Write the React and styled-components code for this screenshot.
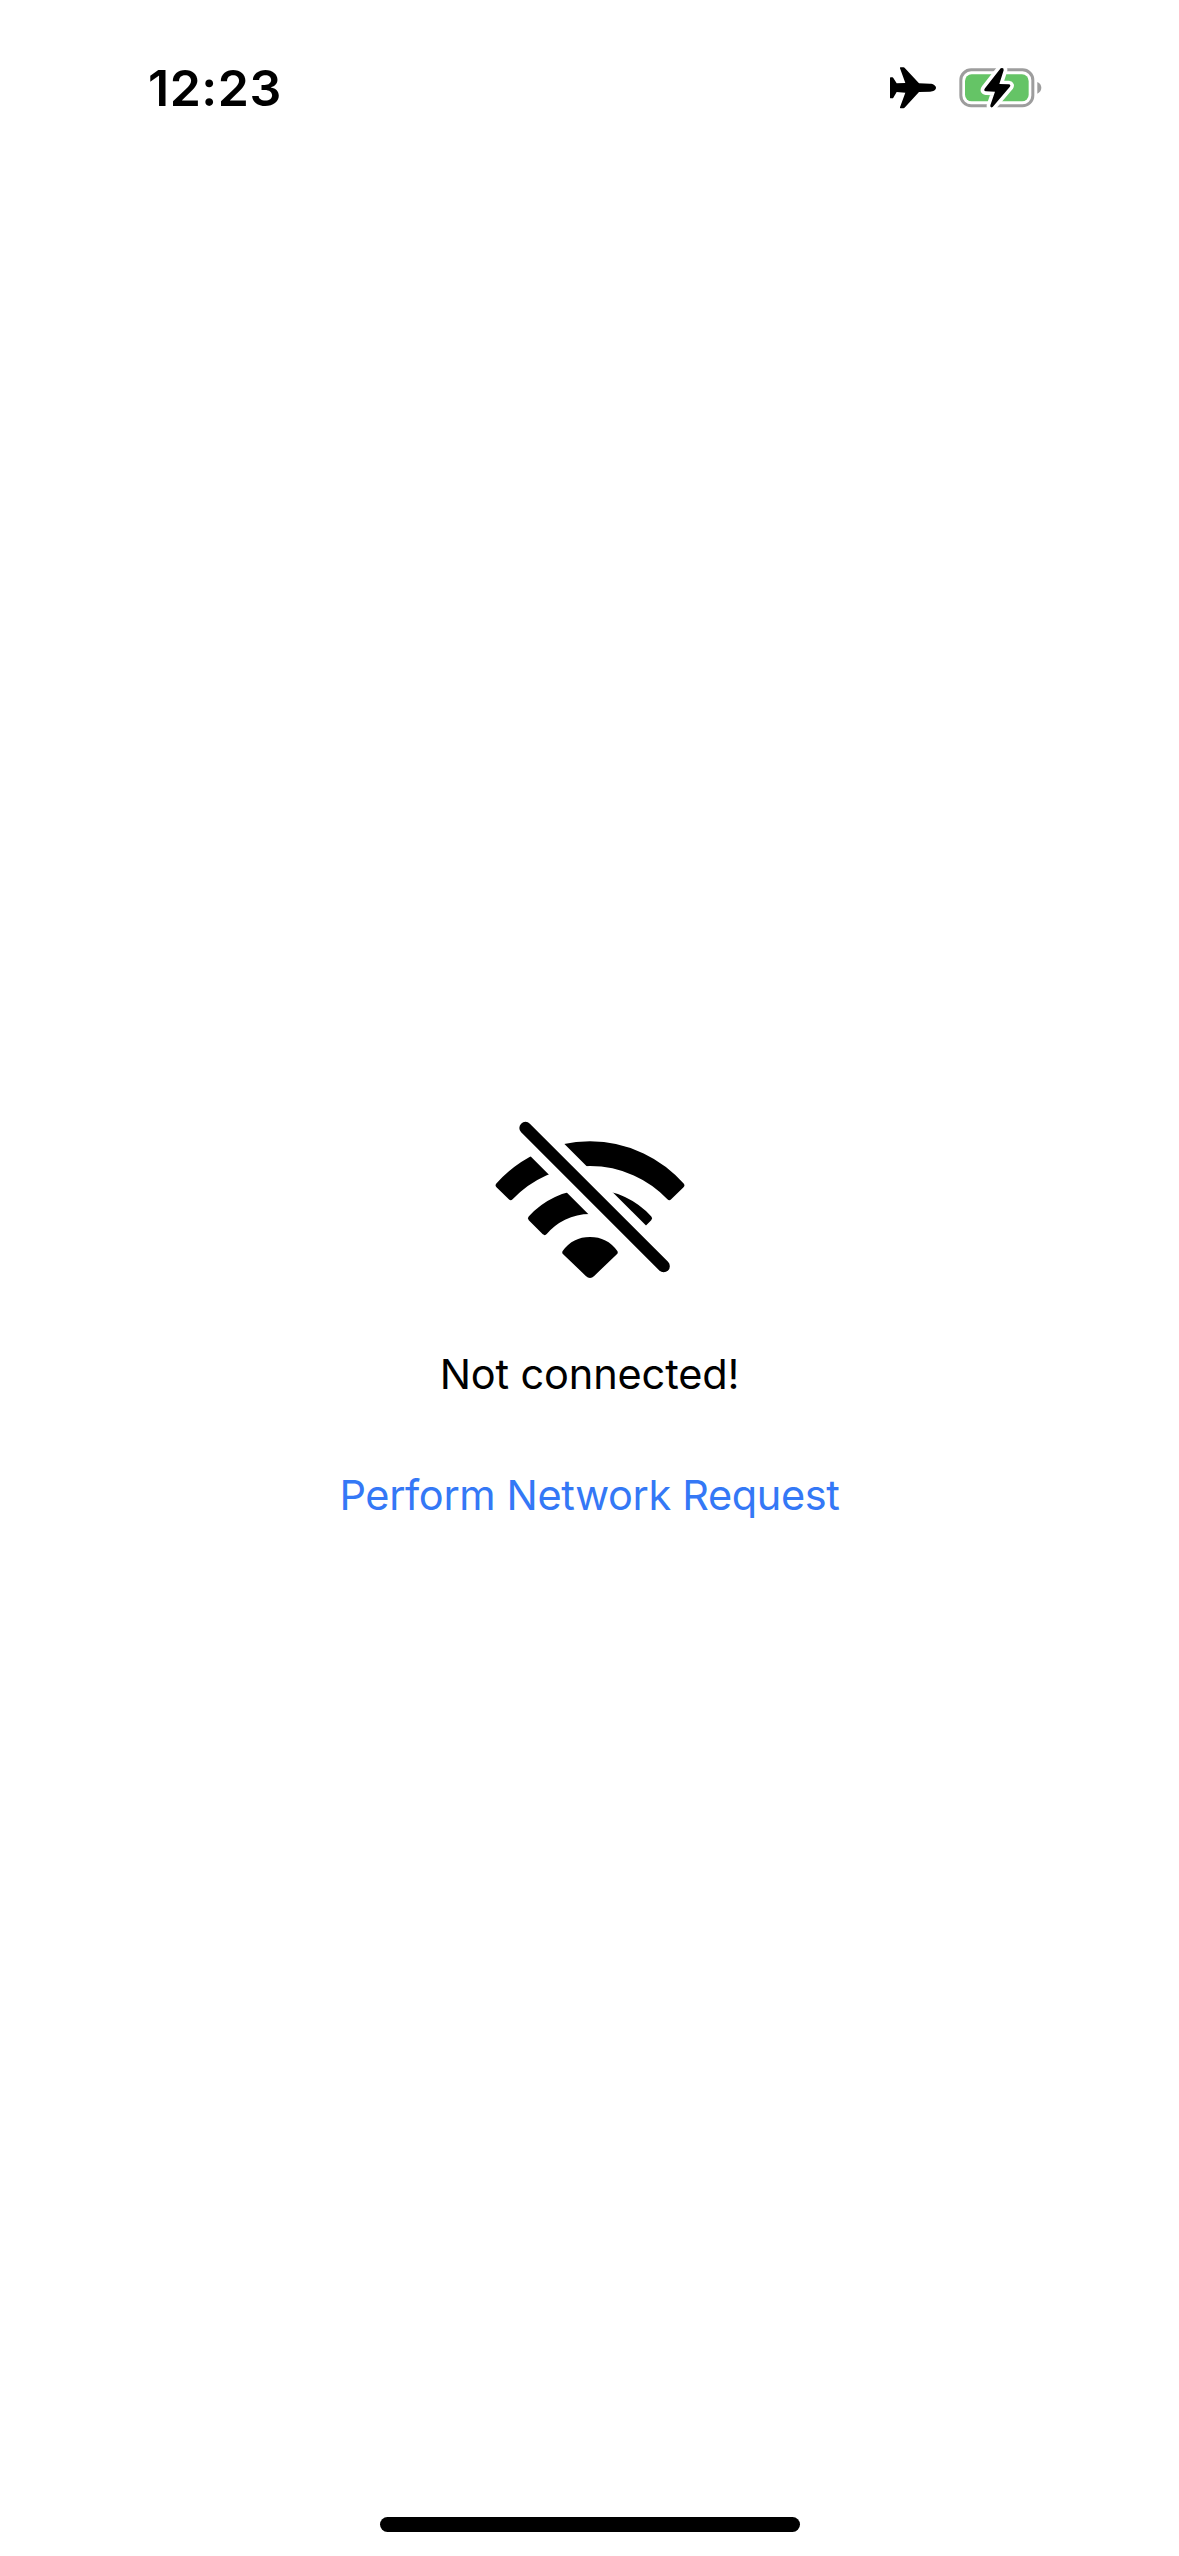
import React from "react";
import styled, { createGlobalStyle } from "styled-components";

const GlobalStyle = createGlobalStyle`
  body {
    margin: 0;
    background: #fff;
  }
`;

const Screen = styled.div`
  display: flex;
  flex-direction: column;
  width: 1179px;
  height: 2556px;
  overflow: hidden;
  background: #fff;
  color: #000;
  font-family: Inter, "Liberation Sans", sans-serif;
`;

const StatusBar = styled.header`
  display: flex;
  justify-content: space-between;
  align-items: center;
  box-sizing: border-box;
  height: 176px;
  padding: 0 137px 0 148px;
`;

const Time = styled.time`
  font-size: 50px;
  line-height: 60px;
  font-weight: 600;
  letter-spacing: 0.5px;
`;

const StatusIcons = styled.div`
  display: flex;
  align-items: center;
  gap: 22px;
`;

const Icon = styled.svg`
  display: block;
  flex: none;
  width: ${(p) => p.$width}px;
  height: ${(p) => p.$height}px;
`;

const Content = styled.main`
  display: flex;
  flex: 1;
  flex-direction: column;
  align-items: center;
  padding-top: 944px;
`;

const Message = styled.p`
  margin: 68px 0 0;
  font-size: 41.5px;
  line-height: 52px;
  font-weight: 400;
  letter-spacing: -0.15px;
`;

const RequestButton = styled.button`
  margin: 69px 0 0;
  padding: 0;
  border: 0;
  background: none;
  color: #3478f6;
  font: inherit;
  font-size: 41.5px;
  line-height: 52px;
  letter-spacing: -0.36px;
`;

const HomeArea = styled.footer`
  display: flex;
  justify-content: center;
  padding-bottom: 24px;
`;

const HomeIndicator = styled.div`
  width: 420px;
  height: 15px;
  border-radius: 8px;
  background: #000;
`;

const Airplane = () => (
  <Icon $width={47} $height={42} viewBox="60 53 141 126">
    <path d="M60 86Q60 84 62 84H67Q69 84 70 86L80 102L106 101L90 57Q89 54 92 54H100Q103 54 105 57L147 102L180 103C190 103 198 109 198 115.500C198 122 190 127 180 127L147 128L105 174Q103 177 100 177H92Q89 177 90 174L106 130L80 128L70 145Q69 147 67 147H62Q60 147 60 145Z" />
  </Icon>
);

const Battery = () => (
  <Icon $width={83} $height={42} viewBox="266 50 249 126">
    <rect x="271.500" y="58.500" width="216" height="108" rx="31" fill="none" stroke="#9d9d9d" strokeWidth="9" />
    <path d="M501 95C509 98 513 105 513 112.500C513 120 509 127 501 130Z" fill="#9d9d9d" />
    <rect x="284" y="72" width="191" height="81" rx="20" fill="#65c466" />
    <path
      d="M391 54L344 114Q338 122 347 123L374 124L360 165Q359 174 367 170L418 110Q423 103 415 102L387 101L400 60Q401 51 391 54Z"
      stroke="#fff"
      strokeWidth="22"
      strokeLinejoin="round"
    />
    <path d="M391 54L344 114Q338 122 347 123L374 124L360 165Q359 174 367 170L418 110Q423 103 415 102L387 101L400 60Q401 51 391 54Z" />
  </Icon>
);

const WifiSlash = () => (
  <Icon $width={190} $height={160} viewBox="44 30 570 480">
    <g stroke="#000" strokeWidth="16" strokeLinejoin="round">
      <path d="M54 226A367 367 0 0 1 604 226L567 262A329 329 0 0 0 91 262Z" />
      <path d="M151 325A240 240 0 0 1 507 325L465 367A178 178 0 0 0 193 367Z" />
      <path d="M254 427A93 93 0 0 1 404 427L336 492Q329 499 322 492Z" />
    </g>
    <path d="M90 9L580 499" stroke="#fff" strokeWidth="98" />
    <path d="M135.500 54L550 468.500" stroke="#000" strokeWidth="37" strokeLinecap="round" />
  </Icon>
);

export default function App() {
  return (
    <>
      <GlobalStyle />
      <Screen>
        <StatusBar>
          <Time>12:23</Time>
          <StatusIcons>
            <Airplane />
            <Battery />
          </StatusIcons>
        </StatusBar>
        <Content>
          <WifiSlash />
          <Message>Not connected!</Message>
          <RequestButton type="button">Perform Network Request</RequestButton>
        </Content>
        <HomeArea>
          <HomeIndicator />
        </HomeArea>
      </Screen>
    </>
  );
}
